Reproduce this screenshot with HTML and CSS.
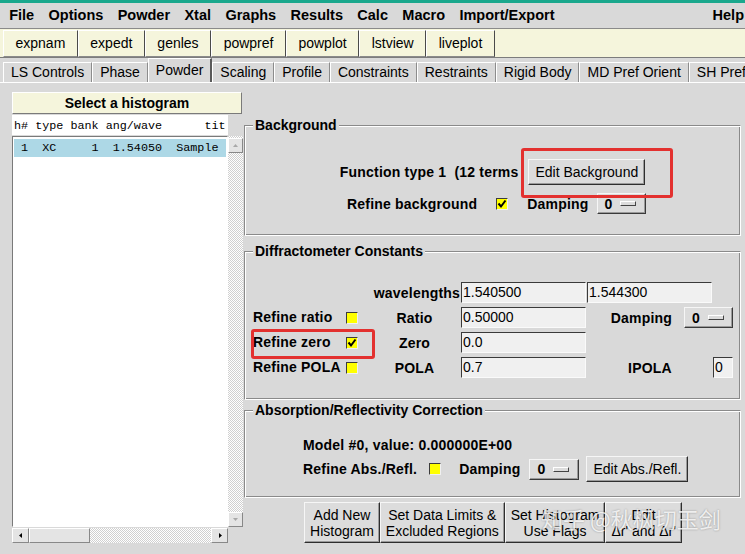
FILE: index.html
```html
<!DOCTYPE html>
<html>
<head>
<meta charset="utf-8">
<title>EXPGUI Powder</title>
<link rel="stylesheet" href="styles.css">
</head>
<body>
<div class="topline"></div>
<div class="menubar">
  <span class="mi">File</span><span class="mi">Options</span><span class="mi">Powder</span><span class="mi">Xtal</span><span class="mi">Graphs</span><span class="mi">Results</span><span class="mi">Calc</span><span class="mi">Macro</span><span class="mi">Import/Export</span><span class="mi help">Help</span>
</div>
<div class="toolbar">
  <span class="tb">expnam</span><span class="tb">expedt</span><span class="tb">genles</span><span class="tb">powpref</span><span class="tb">powplot</span><span class="tb">lstview</span><span class="tb">liveplot</span>
</div>
<div class="tabs">
  <span class="tab">LS Controls</span><span class="tab">Phase</span><span class="tab sel">Powder</span><span class="tab">Scaling</span><span class="tab">Profile</span><span class="tab">Constraints</span><span class="tab">Restraints</span><span class="tab">Rigid Body</span><span class="tab">MD Pref Orient</span><span class="tab">SH Pref Orient</span>
</div>
<div class="pane">
  <div class="left">
    <div class="histhead">Select a histogram</div>
    <div class="colhead">h# type bank ang/wave      tit</div>
    <div class="listarea">
      <div class="list">
        <div class="row"> 1  XC     1  1.54050  Sample</div>
      </div>
      <div class="vscroll">
        <div class="arrow"><svg width="13" height="13" viewBox="0 0 13 13"><polygon points="4,8 6.5,5 9,8" fill="#a8a8a8"/></svg></div>
        <div class="vtrack"></div>
        <div class="arrow"><svg width="13" height="13" viewBox="0 0 13 13"><polygon points="4,5 6.5,8 9,5" fill="#a8a8a8"/></svg></div>
      </div>
    </div>
    <div class="hscroll">
      <div class="arrow"><svg width="14" height="13" viewBox="0 0 14 13"><polygon points="8,4 5,6.5 8,9" fill="#000"/></svg></div>
      <div class="thumb"></div>
      <div class="htrack"></div>
      <div class="arrow"><svg width="14" height="13" viewBox="0 0 14 13"><polygon points="6,4 9,6.5 6,9" fill="#000"/></svg></div>
    </div>
  </div>

  <div class="right">
    <fieldset class="frame">
      <legend>Background</legend>
      <div class="bgbody">
        <div class="bgrow">
          <span class="b">Function type 1&nbsp; (12 terms</span>
          <span class="btn editbg">Edit Background<span class="hl hl-bg"></span></span>
        </div>
        <div class="bgrow bgrow2">
          <span class="b">Refine background</span>
          <span class="cb cb-bg"><svg width="10" height="10" viewBox="0 0 10 10"><path d="M1.5 4.5 L4 7.5 L8.5 1.5" stroke="#000" stroke-width="2" fill="none"/></svg></span>
          <span class="b damp">Damping</span>
          <span class="mb">0<span class="ind"></span></span>
        </div>
      </div>
    </fieldset>

    <fieldset class="frame frame-dc">
      <legend>Diffractometer Constants</legend>
      <div class="dgrid">
        <span class="b wl">wavelengths</span>
        <span class="entry e1">1.540500</span>
        <span class="entry e2">1.544300</span>

        <span class="b lab r2">Refine ratio</span>
        <span class="cb cbcell r2"></span>
        <span class="b name r2">Ratio</span>
        <span class="entry ecol r2">0.50000</span>
        <span class="dampgrp r2"><span class="b">Damping</span><span class="mb">0<span class="ind"></span></span></span>

        <span class="b lab r3 zero">Refine zero<span class="hl hl-zero"></span></span>
        <span class="cb cbcell r3"><svg width="10" height="10" viewBox="0 0 10 10"><path d="M1.5 4.5 L4 7.5 L8.5 1.5" stroke="#000" stroke-width="2" fill="none"/></svg></span>
        <span class="b name r3">Zero</span>
        <span class="entry ecol r3">0.0</span>

        <span class="b lab r4">Refine POLA</span>
        <span class="cb cbcell r4"></span>
        <span class="b name r4">POLA</span>
        <span class="entry ecol r4">0.7</span>
        <span class="b ipola r4">IPOLA</span>
        <span class="entry small r4">0</span>
      </div>
    </fieldset>

    <fieldset class="frame frame-ab">
      <legend>Absorption/Reflectivity Correction</legend>
      <div class="abbody">
        <div class="b model">Model #0, value: 0.000000E+00</div>
        <div class="abrow">
          <span class="b">Refine Abs./Refl.</span>
          <span class="cb cb-ab"></span>
          <span class="b damp2">Damping</span>
          <span class="mb mb-ab">0<span class="ind"></span></span>
          <span class="btn editab">Edit Abs./Refl.</span>
        </div>
      </div>
    </fieldset>

    <div class="bottombar">
      <span class="bb">Add New<br>Histogram</span>
      <span class="bb">Set Data Limits &amp;<br>Excluded Regions</span>
      <span class="bb">Set Histogram<br>Use Flags</span>
      <span class="bb">Edit<br>Δr' and Δr'</span>
    </div>
  </div>
</div>
<div class="wm">知乎 @秋枫切玉剑</div>
</body>
</html>
```

FILE: styles.css
```css
* { box-sizing: border-box; }
html, body { margin: 0; padding: 0; }
body {
  width: 745px;
  height: 554px;
  overflow: hidden;
  position: relative;
  background: #d9d9d9;
  font-family: "Liberation Sans", Arial, sans-serif;
  font-size: 14px;
  color: #000;
}
.b { font-weight: bold; letter-spacing: 0.2px; }

.topline { height: 3px; background: #1aa88d; }

.menubar {
  height: 26px;
  display: flex;
  align-items: center;
  padding-left: 2px;
  border-bottom: 1px solid #8a8a8a;
  font-weight: bold;
  font-size: 14.5px;
  white-space: nowrap;
}
.mi { padding: 0 7.2px; line-height: 25px; }
.mi.help { margin-left: auto; padding-right: 1px; }

.toolbar {
  height: 29px;
  background: #f5f5dc;
  display: flex;
  padding: 1px 0 0 3px;
  border-bottom: 1px solid #7c7c7c;
}
.tb {
  height: 27px;
  line-height: 25px;
  padding: 0 11.5px;
  border: 1px solid;
  border-color: #ffffff #4a4a4a #8a8a8a #ffffff;
}

.tabs {
  height: 24px;
  display: flex;
  align-items: flex-end;
  padding-left: 3px;
  overflow: hidden;
  white-space: nowrap;
}
.tab {
  flex-shrink: 0;
  height: 20px;
  line-height: 19px;
  padding: 0 7px;
  border-top: 1px solid #fff;
  border-left: 1px solid #fff;
  border-right: 1px solid #8c8c8c;
}
.tab.sel {
  height: 25px;
  margin-bottom: -1px;
  line-height: 22px;
  padding: 0 7px;
  border-right: 2px solid #5a5a5a;
  background: #d9d9d9;
  position: relative;
  z-index: 1;
}

.pane {
  display: flex;
  border-top: 1px solid #fff;
  height: 472px;
}

/* left histogram list */
.left { width: 244px; flex-shrink: 0; padding: 9px 0 0 12px; }
.histhead {
  width: 230px;
  height: 22px;
  background: #f5f5dc;
  border: 1px solid;
  border-color: #fff #7a7a7a #7a7a7a #fff;
  font-weight: bold;
  text-align: center;
  line-height: 20px;
}
.colhead {
  margin-top: 1px;
  width: 216px;
  height: 20px;
  background: #fff;
  font-family: "Liberation Mono", "Courier New", monospace;
  font-size: 11.75px;
  line-height: 22px;
  padding-left: 2px;
  white-space: pre;
  overflow: hidden;
}
.listarea { display: flex; margin-top: 1px; }
.list {
  width: 216px;
  height: 391px;
  background: #fff;
  border: 1px solid;
  border-color: #7a7a7a #fff #fff #7a7a7a;
  padding: 2px 1px;
  overflow: hidden;
}
.row {
  height: 18px;
  line-height: 18px;
  background: #add8e6;
  font-family: "Liberation Mono", "Courier New", monospace;
  font-size: 11.75px;
  white-space: pre;
  overflow: hidden;
}
.vscroll {
  width: 15px;
  height: 391px;
  display: flex;
  flex-direction: column;
  padding-top: 2px;
  background: repeating-conic-gradient(#ffffff 0 25%, #d0d0d0 0 50%) 0 0 / 2px 2px;
}
.vtrack { flex: 1; }
.arrow {
  width: 15px;
  height: 15px;
  flex-shrink: 0;
  background: #e4e4e4;
  border: 1px solid;
  border-color: #fff #888 #888 #fff;
  display: flex;
  align-items: center;
  justify-content: center;
}
.hscroll {
  width: 216px;
  height: 15px;
  margin-top: 1px;
  display: flex;
  background: repeating-conic-gradient(#ffffff 0 25%, #d0d0d0 0 50%) 0 0 / 2px 2px;
}
.hscroll .arrow { width: 17px; }
.thumb {
  width: 61px;
  height: 15px;
  background: #e4e4e4;
  border: 1px solid;
  border-color: #fff #888 #888 #fff;
}
.htrack { flex: 1; }

/* right side frames */
.right { width: 498px; flex-shrink: 0; padding-top: 34px; }
.frame {
  margin: 0;
  padding: 0;
  width: 497px;
  min-width: 0;
  border: 1px solid;
  border-color: #8a8a8a #fff #fff #8a8a8a;
  box-shadow: inset 1px 1px 0 #fff, inset -1px -1px 0 #8a8a8a;
}
.frame legend {
  margin-left: 8px;
  padding: 0 2px;
  font-weight: bold;
  line-height: 16px;
  background: #d9d9d9;
}
.frame-dc { margin-top: 7px; }
.frame-ab { margin-top: 2px; }

.btn {
  display: inline-flex;
  align-items: center;
  height: 26px;
  padding: 0 6px;
  background: #dcdcdc;
  border: 1px solid;
  border-color: #f6f6f6 #2e2e2e #2e2e2e #f6f6f6;
  box-shadow: inset -1px -1px 0 #9a9a9a;
  white-space: nowrap;
}
.hl {
  position: absolute;
  border: 3px solid #e3312f;
  border-radius: 3px;
}
.editbg { position: relative; margin-left: 10px; }
.hl-bg { left: -8px; top: -12px; width: 152px; height: 50px; }

.bgbody {
  padding: 26px 0 21px;
  display: flex;
  flex-direction: column;
  align-items: center;
  gap: 8px;
}
.bgrow { display: flex; align-items: center; height: 26px; white-space: nowrap; }
.bgrow2 { height: 21px; margin-left: 7.5px; }
.cb {
  display: inline-flex;
  align-items: center;
  justify-content: center;
  width: 12px;
  height: 12px;
  background: #ffff00;
  border: 1px solid;
  border-color: #3c3c3c #f0f0f0 #f0f0f0 #3c3c3c;
}
.cb-bg { margin-left: 19px; }
.damp { margin-left: 19px; }
.mb {
  display: inline-flex;
  align-items: center;
  width: 49px;
  height: 21px;
  padding-left: 7px;
  font-weight: bold;
  background: #dcdcdc;
  border: 1px solid;
  border-color: #f6f6f6 #3a3a3a #3a3a3a #f6f6f6;
  box-shadow: inset -1px -1px 0 #9a9a9a;
}
.bgrow .mb { margin-left: 8px; }
.ind {
  width: 16px;
  height: 5px;
  margin-left: 8px;
  border: 1px solid;
  border-color: #fff #444 #444 #fff;
}

/* diffractometer grid */
.dgrid {
  display: grid;
  grid-template-columns: 88px 21px 99px 126px 126px 28px;
  grid-template-rows: repeat(4, 21px);
  row-gap: 4px;
  align-items: center;
  padding: 23px 0 21px 8px;
  white-space: nowrap;
}
.entry {
  display: block;
  height: 21px;
  width: 125px;
  line-height: 19px;
  padding-left: 1px;
  background: #f0f0f0;
  border: 1px solid;
  border-color: #3a3a3a #fafafa #fafafa #3a3a3a;
  overflow: hidden;
}
.wl { grid-row: 1; grid-column: 1 / 4; justify-self: end; padding-right: 1px; }
.e1 { grid-row: 1; grid-column: 4; }
.e2 { grid-row: 1; grid-column: 5; }
.r2 { grid-row: 2; }
.r3 { grid-row: 3; }
.r4 { grid-row: 4; }
.lab { grid-column: 1; line-height: 21px; }
.cbcell { grid-column: 2; justify-self: center; }
.name { grid-column: 3; justify-self: center; padding-left: 6px; }
.ecol { grid-column: 4; }
.dampgrp {
  grid-column: 5 / 7;
  display: flex;
  align-items: center;
  justify-content: flex-end;
  gap: 12px;
  padding-right: 8px;
}
.ipola { grid-column: 5; justify-self: center; }
.small { grid-column: 6; width: 20px; }
.zero { position: relative; }
.hl-zero { left: -2px; top: -3px; width: 124px; height: 30px; }

/* absorption */
.abbody { padding: 19px 0 15px 58px; white-space: nowrap; }
.model { line-height: 16px; }
.abrow { display: flex; align-items: center; height: 26px; margin-top: 3px; }
.cb-ab { margin-left: 12px; }
.damp2 { margin-left: 18px; }
.mb-ab { margin-left: 9px; width: 50px; }
.editab { margin-left: 7px; }

/* bottom buttons */
.bottombar { display: flex; justify-content: center; margin-top: 4px; }
.bb {
  padding: 4px 5px 3px;
  line-height: 16px;
  text-align: center;
  white-space: nowrap;
  background: #dcdcdc;
  border: 1px solid;
  border-color: #f6f6f6 #2e2e2e #2e2e2e #f6f6f6;
  box-shadow: inset -1px -1px 0 #9a9a9a;
}

.wm {
  position: absolute;
  left: 541px;
  top: 503px;
  font-family: "Noto Sans CJK SC", sans-serif;
  font-size: 22px;
  line-height: 30px;
  color: rgba(255, 255, 255, 0.82);
  text-shadow: 0 0 2px rgba(0, 0, 0, 0.35);
  white-space: nowrap;
}
```
